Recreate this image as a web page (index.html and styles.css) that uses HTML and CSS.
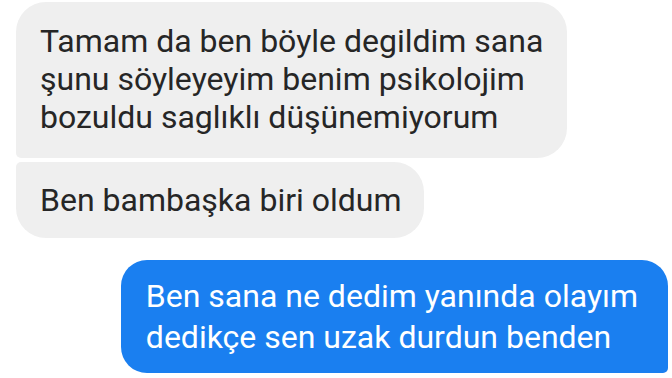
FILE: index.html
```html
<!DOCTYPE html>
<html lang="tr">

<head>
    <meta charset="UTF-8">
    <meta name="viewport" content="width=device-width, initial-scale=1.0">
    <title>Mesajlar</title>
    <link rel="stylesheet" href="styles.css">
</head>

<body>
    <div class="chat">
        <div class="msg msg-in msg-first">
            Tamam da ben böyle degildim sana<br>
            şunu söyleyeyim benim psikolojim<br>
            bozuldu saglıklı düşünemiyorum
        </div>
        <div class="msg msg-in msg-last">
            Ben bambaşka biri oldum
        </div>
        <div class="msg msg-out">
            Ben sana ne dedim yanında olayım<br>
            dedikçe sen uzak durdun benden
        </div>
    </div>
</body>

</html>
```

FILE: styles.css
```css
body {
    font-family: Roboto, "Noto Sans", Arial, sans-serif;
    margin: 0;
    background-color: #ffffff;
}

.chat {
    display: flex;
    flex-direction: column;
    padding: 2px 4px 0 16px;
}

.msg {
    width: fit-content;
    font-size: 32px;
    line-height: 38px;
    padding: 20px 24px 22px 24px;
    border-radius: 30px;
}

.msg-in {
    background-color: #efefef;
    color: #262626;
}

.msg-first {
    border-bottom-left-radius: 5px;
}

.msg-last {
    margin-top: 4px;
    padding-top: 19px;
    padding-bottom: 19px;
    padding-right: 22px;
    border-top-left-radius: 5px;
}

.msg-out {
    align-self: flex-end;
    margin-top: 22px;
    padding: 16px 30px 15px 25px;
    line-height: 41px;
    background-color: #1a7ff0;
    color: #ffffff;
    border-radius: 26px;
    border-bottom-right-radius: 5px;
}
```
